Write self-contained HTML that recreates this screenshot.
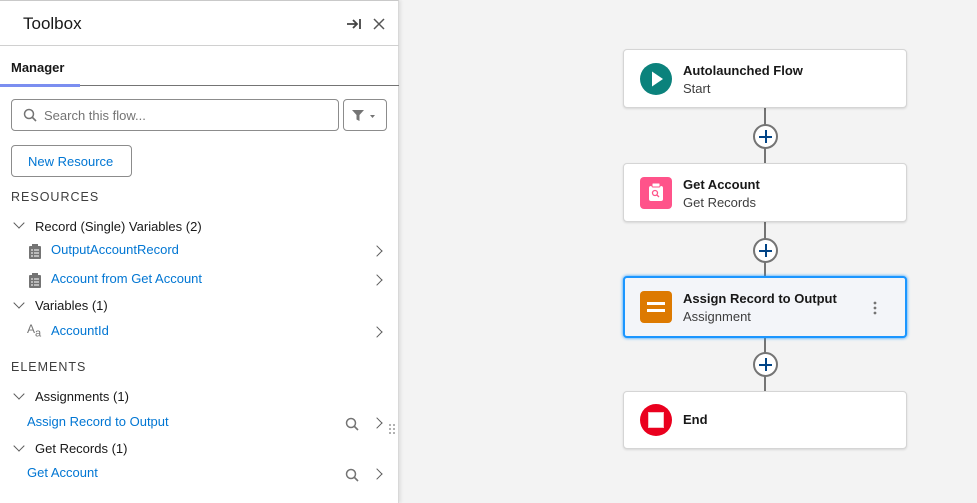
<!DOCTYPE html>
<html><head><style>
*{box-sizing:border-box;margin:0;padding:0}
body{width:977px;height:503px;overflow:hidden;background:#f3f3f3;font-family:"Liberation Sans",sans-serif;position:relative;color:#181818}
.side{position:absolute;left:0;top:0;width:399px;height:503px;background:#fff;border-right:1px solid #d8d8d8;border-top:1px solid #c9c9c9;box-shadow:2px 0 3px rgba(0,0,0,.08)}
.a{position:absolute}
.link{color:#0176d3;font-size:13px}
.t{font-size:13px;color:#181818}
.chev{position:absolute;width:8px;height:8px;border-right:1.6px solid #5c5c5c;border-bottom:1.6px solid #5c5c5c}
.r{transform:rotate(-45deg)}
.d{transform:rotate(45deg)}
.card{position:absolute;left:623px;width:284px;background:#fff;border:1px solid #d5d5d5;border-radius:4px;box-shadow:0 1px 2px rgba(0,0,0,.12)}
.card b{position:absolute;left:59px;font-size:13px}
.card span{position:absolute;left:59px;font-size:13px;color:#3e3e3e}
.ic{position:absolute;left:16px;width:32px;height:32px}
.line{position:absolute;left:764px;width:2px;background:#747474}
.plus{position:absolute;left:753px;width:25px;height:25px;border-radius:50%;border:2px solid #747474;background:#fff}
.plus:before{content:"";position:absolute;left:4px;top:9.5px;width:13px;height:2px;background:#014486}
.plus:after{content:"";position:absolute;left:9.5px;top:4px;width:2px;height:13px;background:#014486}
</style></head><body>
<div class="side">
<div class="a" style="left:23px;top:13px;font-size:17px;color:#181818">Toolbox</div>
<svg class="a" style="left:346px;top:16px" width="16" height="14" viewBox="0 0 16 14"><path d="M1 7h10M7 3l4 4-4 4" stroke="#444" stroke-width="1.8" fill="none"/><path d="M14 2v10" stroke="#444" stroke-width="1.8"/></svg>
<svg class="a" style="left:373px;top:17px" width="12" height="12" viewBox="0 0 12 12"><path d="M1 1l10 10M11 1L1 11" stroke="#555" stroke-width="1.5"/></svg>
<div class="a" style="left:0;top:44px;width:399px;height:1px;background:#d0d0d0"></div>
<div class="a" style="left:11px;top:59px;font-size:13px;font-weight:bold">Manager</div>
<div class="a" style="left:0;top:84px;width:399px;height:1px;background:#747474"></div>
<div class="a" style="left:0;top:83px;width:80px;height:3px;background:#7b8ef0"></div>
<div class="a" style="left:11px;top:98px;width:328px;height:32px;border:1px solid #8c8c8c;border-radius:4px"></div>
<svg class="a" style="left:23px;top:107px" width="14" height="14" viewBox="0 0 14 14"><circle cx="6" cy="6" r="4.5" stroke="#747474" stroke-width="1.5" fill="none"/><path d="M9.5 9.5l3.5 3.5" stroke="#747474" stroke-width="1.6"/></svg>
<div class="a" style="left:44px;top:107px;font-size:13px;color:#747474">Search this flow...</div>
<div class="a" style="left:343px;top:98px;width:44px;height:32px;border:1px solid #8c8c8c;border-radius:4px"></div>
<svg class="a" style="left:352px;top:108px" width="28" height="13" viewBox="0 0 28 13"><path d="M0 1h12l-4.5 5v6l-3-1.5V6z" fill="#747474"/><path d="M18 6h5l-2.5 3z" fill="#747474"/></svg>
<div class="a" style="left:11px;top:144px;width:121px;height:32px;border:1px solid #8c8c8c;border-radius:4px"></div>
<div class="a link" style="left:28px;top:153px">New Resource</div>
<div class="a" style="left:11px;top:189px;font-size:12.5px;letter-spacing:1px;color:#3e3e3e">RESOURCES</div>
<div class="chev d" style="left:15px;top:218px"></div>
<div class="a t" style="left:35px;top:218px">Record (Single) Variables (2)</div>
<svg class="a" style="left:28px;top:243px" width="14" height="15" viewBox="0 0 14 15"><rect x="1" y="2" width="12" height="13" rx="1" fill="#747474"/><rect x="4" y="0" width="6" height="3" fill="#747474"/><path d="M3 6h2M6 6h5M3 9h2M6 9h5M3 12h2M6 12h5" stroke="#fff" stroke-width="1"/></svg>
<div class="a link" style="left:51px;top:241px">OutputAccountRecord</div>
<div class="chev r" style="left:373px;top:246px"></div>
<svg class="a" style="left:28px;top:272px" width="14" height="15" viewBox="0 0 14 15"><rect x="1" y="2" width="12" height="13" rx="1" fill="#747474"/><rect x="4" y="0" width="6" height="3" fill="#747474"/><path d="M3 6h2M6 6h5M3 9h2M6 9h5M3 12h2M6 12h5" stroke="#fff" stroke-width="1"/></svg>
<div class="a link" style="left:51px;top:270px">Account from Get Account</div>
<div class="chev r" style="left:373px;top:275px"></div>
<div class="chev d" style="left:15px;top:298px"></div>
<div class="a t" style="left:35px;top:297px">Variables (1)</div>
<div class="a" style="left:27px;top:321px;font-size:12px;color:#747474">A<sub style="font-size:11px">a</sub></div>
<div class="a link" style="left:51px;top:322px">AccountId</div>
<div class="chev r" style="left:373px;top:327px"></div>
<div class="a" style="left:11px;top:359px;font-size:12.5px;letter-spacing:1px;color:#3e3e3e">ELEMENTS</div>
<div class="chev d" style="left:15px;top:389px"></div>
<div class="a t" style="left:35px;top:388px">Assignments (1)</div>
<div class="a link" style="left:27px;top:413px">Assign Record to Output</div>
<svg class="a" style="left:345px;top:416px" width="14" height="14" viewBox="0 0 14 14"><circle cx="6" cy="6" r="4.5" stroke="#747474" stroke-width="1.5" fill="none"/><path d="M9.5 9.5l3.5 3.5" stroke="#747474" stroke-width="1.6"/></svg>
<div class="chev r" style="left:373px;top:418px"></div>
<svg class="a" style="left:388px;top:422px" width="8" height="14"><g fill="#999"><circle cx="2" cy="2" r="1"/><circle cx="6" cy="2" r="1"/><circle cx="2" cy="6" r="1"/><circle cx="6" cy="6" r="1"/><circle cx="2" cy="10" r="1"/><circle cx="6" cy="10" r="1"/></g></svg>
<div class="chev d" style="left:15px;top:441px"></div>
<div class="a t" style="left:35px;top:440px">Get Records (1)</div>
<div class="a link" style="left:27px;top:464px">Get Account</div>
<svg class="a" style="left:345px;top:467px" width="14" height="14" viewBox="0 0 14 14"><circle cx="6" cy="6" r="4.5" stroke="#747474" stroke-width="1.5" fill="none"/><path d="M9.5 9.5l3.5 3.5" stroke="#747474" stroke-width="1.6"/></svg>
<div class="chev r" style="left:373px;top:469px"></div>
</div>

<div class="line" style="top:107px;height:57px"></div>
<div class="line" style="top:221px;height:56px"></div>
<div class="line" style="top:338px;height:54px"></div>
<div class="plus" style="top:124px"></div>
<div class="plus" style="top:238px"></div>
<div class="plus" style="top:352px"></div>

<div class="card" style="top:49px;height:59px">
<svg class="ic" style="top:13px" viewBox="0 0 32 32"><circle cx="16" cy="16" r="16" fill="#0b827c"/><path d="M12 8.5v15l11-7.5z" fill="#fff"/></svg>
<b style="top:13px">Autolaunched Flow</b><span style="top:31px">Start</span></div>
<div class="card" style="top:163px;height:59px">
<svg class="ic" style="top:13px" viewBox="0 0 32 32"><rect width="32" height="32" rx="4" fill="#ff538a"/><rect x="9" y="9" width="14" height="15" rx="2" fill="#fff"/><rect x="12" y="6" width="8" height="4" rx="1" fill="#fff" stroke="#ff538a"/><circle cx="15" cy="16" r="2.5" stroke="#ff538a" stroke-width="1.3" fill="none"/><path d="M17 18l2 2" stroke="#ff538a" stroke-width="1.3"/></svg>
<b style="top:13px">Get Account</b><span style="top:31px">Get Records</span></div>
<div class="card" style="top:276px;height:62px;background:#f3f5f9;border:2px solid #1b96ff;box-shadow:0 0 3px #1b96ff">
<svg class="ic" style="top:13px;left:15px" viewBox="0 0 32 32"><rect width="32" height="32" rx="4" fill="#dd7a01"/><rect x="7" y="11" width="18" height="3" fill="#fff"/><rect x="7" y="18" width="18" height="3" fill="#fff"/></svg>
<b style="top:13px;left:58px">Assign Record to Output</b><span style="top:31px;left:58px">Assignment</span>
<svg class="a" style="left:248px;top:23px" width="4" height="14"><g fill="#747474"><circle cx="2" cy="2" r="1.4"/><circle cx="2" cy="7" r="1.4"/><circle cx="2" cy="12" r="1.4"/></g></svg></div>
<div class="card" style="top:391px;height:58px">
<svg class="ic" style="top:12px" viewBox="0 0 32 32"><circle cx="16" cy="16" r="16" fill="#ea001e"/><rect x="8.5" y="8.5" width="15" height="15" fill="#fff" stroke="#f9c0c6"/></svg>
<b style="top:20px">End</b></div>
</body></html>
